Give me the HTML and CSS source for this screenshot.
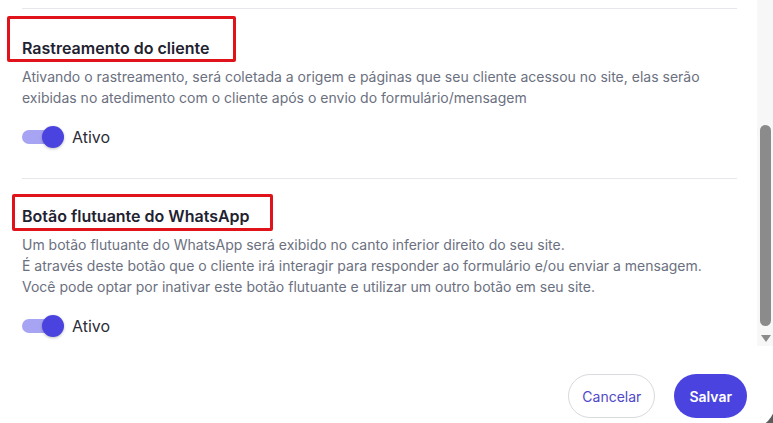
FILE: index.html
```html
<!DOCTYPE html>
<html lang="pt-BR">
<head>
    <meta charset="UTF-8">
    <meta name="viewport" content="width=device-width, initial-scale=1.0">
    <title>Configurações do formulário</title>
    <link rel="stylesheet" href="styles.css">
</head>
<body>

    <div class="modal">
        <div class="panel">
            <div class="section">
                <h3 class="section-title">Rastreamento do cliente</h3>
                <span class="mark mark-one"></span>
                <p class="section-text">Ativando o rastreamento, será coletada a origem e páginas que seu cliente acessou no site, elas serão<br>exibidas no atedimento com o cliente após o envio do formulário/mensagem</p>
                <label class="switch">
                    <span class="switch-track"><span class="switch-knob"></span></span>
                    <span class="switch-label">Ativo</span>
                </label>
            </div>

            <div class="section">
                <h3 class="section-title">Botão flutuante do WhatsApp</h3>
                <span class="mark mark-two"></span>
                <p class="section-text">Um botão flutuante do WhatsApp será exibido no canto inferior direito do seu site.<br>É através deste botão que o cliente irá interagir para responder ao formulário e/ou enviar a mensagem.<br>Você pode optar por inativar este botão flutuante e utilizar um outro botão em seu site.</p>
                <label class="switch">
                    <span class="switch-track"><span class="switch-knob"></span></span>
                    <span class="switch-label">Ativo</span>
                </label>
            </div>

            <div class="scrollbar">
                <div class="scrollbar-thumb"></div>
                <div class="scrollbar-arrow"></div>
            </div>
        </div>

        <div class="footer">
            <button class="btn btn-cancel">Cancelar</button>
            <button class="btn btn-save">Salvar</button>
        </div>
    </div>

</body>
</html>
```

FILE: styles.css
```css
body {
    margin: 0;
    background-color: #5c5c5c;
    font-family: 'Inter', 'Noto Sans', sans-serif;
    overflow: hidden;
}
.modal {
    width: 775px;
    height: 428px;
    background: #fff;
    border-bottom-right-radius: 24px;
}
.panel {
    position: relative;
    height: 350px;
    padding: 8px 38px 0 22px;
    overflow: hidden;
}
.section {
    position: relative;
    border-top: 1px solid #e6e7eb;
    padding-top: 28px;
    padding-bottom: 29px;
}
.section + .section {
    padding-top: 26px;
}
.section-title {
    margin: 0;
    font-size: 16px;
    line-height: 22px;
    font-weight: 600;
    color: #1f2231;
}
.section-text {
    margin: 7px 0 0;
    font-size: 14px;
    line-height: 21px;
    color: #6b7080;
}
.switch {
    display: flex;
    align-items: center;
    gap: 12px;
    margin-top: 17px;
    height: 24px;
}
.switch-track {
    position: relative;
    width: 38px;
    height: 14px;
    border-radius: 7px;
    background: #a7a4f3;
}
.switch-knob {
    position: absolute;
    right: -4px;
    top: -4px;
    width: 22px;
    height: 22px;
    border-radius: 50%;
    background: #4a43df;
    box-shadow: 0 1px 3px rgba(0, 0, 0, 0.25);
}
.switch-label {
    font-size: 16px;
    color: #2b2d38;
}

/* annotation boxes */
.mark {
    position: absolute;
    border: 3px solid #e0121a;
    border-radius: 2px;
}
.mark-one {
    left: -15px;
    top: 7px;
    width: 223px;
    height: 40px;
}
.mark-two {
    left: -10px;
    top: 15px;
    width: 255px;
    height: 31px;
}

.scrollbar {
    position: absolute;
    right: 0;
    top: 0;
    width: 18px;
    height: 346px;
    background: #f7f7f7;
}
.scrollbar-thumb {
    position: absolute;
    left: 3px;
    top: 125px;
    width: 11px;
    height: 201px;
    border-radius: 6px;
    background: #8b8b8b;
}
.scrollbar-arrow {
    position: absolute;
    left: 4px;
    top: 335px;
    width: 0;
    height: 0;
    border-left: 5px solid transparent;
    border-right: 5px solid transparent;
    border-top: 7px solid #8b8b8b;
}

.footer {
    display: flex;
    justify-content: flex-end;
    gap: 19px;
    padding: 16px 28px 0 0;
}
.btn {
    height: 44px;
    border-radius: 22px;
    padding: 0 13px;
    font-family: 'Inter', 'Noto Sans', sans-serif;
    font-size: 14px;
}
.btn-cancel {
    background: #fff;
    border: 1px solid #d9d9de;
    color: #4f48c8;
}
.btn-save {
    background: #4a43df;
    border: none;
    color: #fff;
    font-weight: 600;
    padding: 0 15px;
}
```
